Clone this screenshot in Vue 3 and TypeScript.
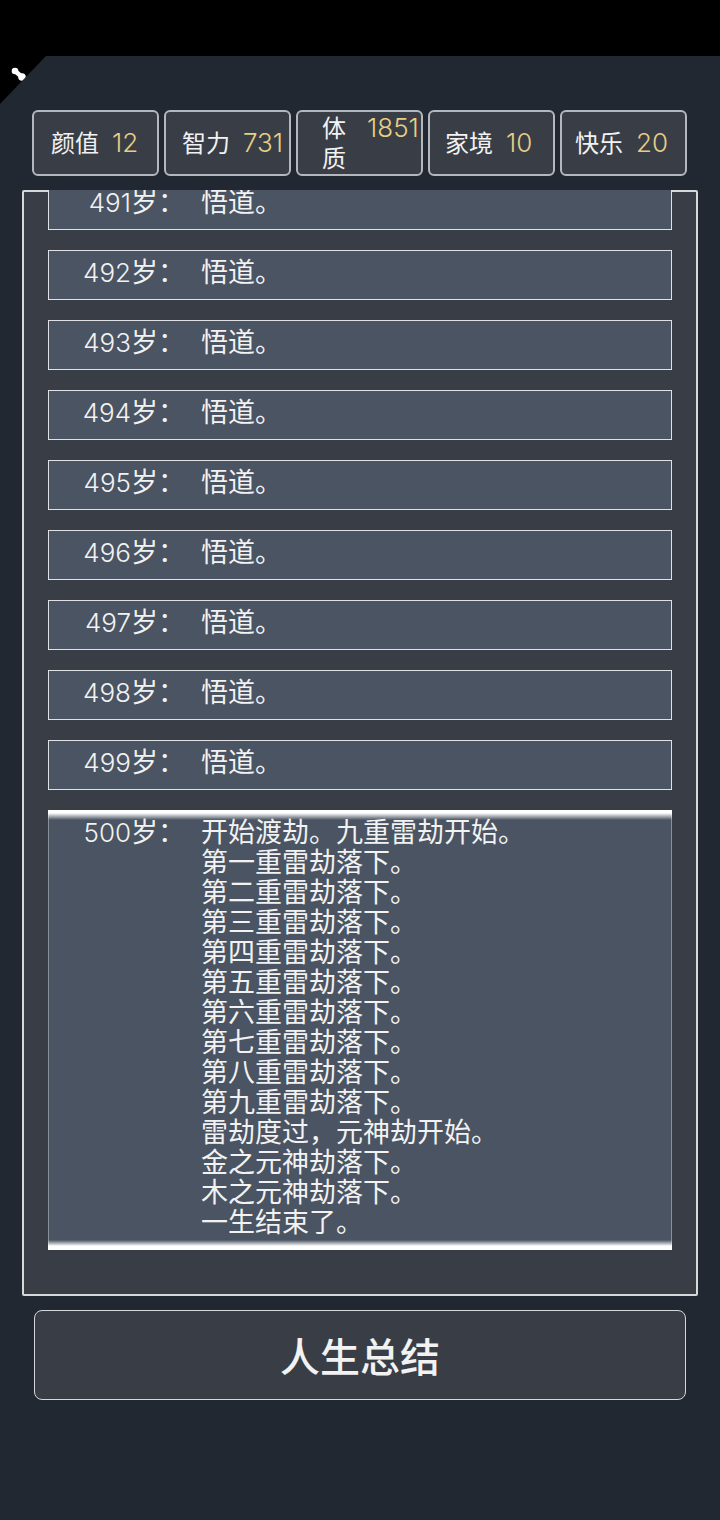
<script setup lang="ts">
interface Stat {
  label: string;
  value: number;
}

interface LifeEvent {
  age: number;
  lines: string[];
}

const stats: Stat[] = [
  { label: '颜值', value: 12 },
  { label: '智力', value: 731 },
  { label: '体质', value: 1851 },
  { label: '家境', value: 10 },
  { label: '快乐', value: 20 },
];

const events: LifeEvent[] = [
  ...[491, 492, 493, 494, 495, 496, 497, 498, 499].map((age) => ({ age, lines: ['悟道。'] })),
  {
    age: 500,
    lines: [
      '开始渡劫。九重雷劫开始。',
      '第一重雷劫落下。',
      '第二重雷劫落下。',
      '第三重雷劫落下。',
      '第四重雷劫落下。',
      '第五重雷劫落下。',
      '第六重雷劫落下。',
      '第七重雷劫落下。',
      '第八重雷劫落下。',
      '第九重雷劫落下。',
      '雷劫度过，元神劫开始。',
      '金之元神劫落下。',
      '木之元神劫落下。',
      '一生结束了。',
    ],
  },
];
</script>

<template>
  <div class="page">
    <div class="status-bar"></div>
    <div class="corner">
      <svg class="corner-icon" viewBox="0 0 16 14" width="16" height="14">
        <circle cx="4" cy="4" r="3.3" fill="#fff" />
        <path d="M4 4 L11 10" stroke="#fff" stroke-width="4.5" />
        <circle cx="11" cy="10" r="3.8" fill="#fff" />
      </svg>
    </div>

    <div class="stats">
      <div v-for="stat in stats" :key="stat.label" class="stat">
        <div class="stat-inner">
          <span class="stat-label">{{ stat.label }}</span>
          <span class="stat-value">{{ stat.value }}</span>
        </div>
      </div>
    </div>

    <div class="panel">
      <div class="list">
        <div
          v-for="event in events"
          :key="event.age"
          class="event"
          :class="{ current: event.age === 500 }"
        >
          <span class="age"><span class="age-num">{{ event.age }}</span>岁：</span>
          <div class="lines">
            <div v-for="line in event.lines" :key="line">{{ line }}</div>
          </div>
        </div>
      </div>
    </div>

    <div class="summary">人生总结</div>
  </div>
</template>

<style>
html,
body {
  margin: 0;
  background: #222831;
}
</style>

<style scoped>
.page {
  position: relative;
  width: 720px;
  height: 1520px;
  background: #222831;
  color: #f2f2f2;
  font-family: Inter, "Noto Sans CJK SC", sans-serif;
  font-weight: 400;
  overflow: hidden;
}

.status-bar {
  height: 56px;
  background: #000;
}

.corner {
  position: absolute;
  top: 56px;
  left: 0;
  width: 46px;
  height: 48px;
  background: #000;
  clip-path: polygon(0 0, 100% 0, 0 100%);
}

.corner-icon {
  position: absolute;
  top: 11px;
  left: 11px;
  filter: blur(0.6px);
}

.stats {
  display: flex;
  gap: 5px;
  margin: 54px 0 14px 32px;
}

.stat {
  box-sizing: border-box;
  width: 127px;
  height: 66px;
  display: flex;
  align-items: center;
  background: #393e46;
  border: 2px solid #b4b8be;
  border-radius: 6px;
}

.stat-inner {
  display: flex;
  align-items: baseline;
  gap: 13px;
  width: 100%;
  padding-left: 17px;
  box-sizing: border-box;
}

.stat:nth-child(2) .stat-inner {
  padding-left: 16px;
}

.stat:nth-child(3) .stat-inner {
  padding-left: 24px;
  gap: 21px;
}

.stat:nth-child(4) .stat-inner {
  padding-left: 15px;
}

.stat:nth-child(5) .stat-inner {
  padding-left: 13px;
}

.stat-label {
  font-size: 24px;
  line-height: 30px;
  flex: 0 0 48px;
}

.stat:nth-child(3) .stat-label {
  flex-basis: 24px;
}

.stat-value {
  font-size: 26px;
  font-weight: 300;
  line-height: 30px;
  color: #e6cf85;
}

.panel {
  box-sizing: border-box;
  width: 676px;
  height: 1106px;
  margin-left: 22px;
  padding: 0 24px 44px;
  display: flex;
  flex-direction: column;
  background: #393e46;
  border: 2px solid #d6d8db;
  border-radius: 2px;
}

.list {
  flex: 1;
  min-height: 0;
  margin-top: -2px;
  display: flex;
  flex-direction: column;
  justify-content: flex-end;
  gap: 20px;
  overflow: hidden;
}

.event {
  flex: none;
  box-sizing: border-box;
  display: flex;
  height: 50px;
  padding: 7px 0 11px;
  background: #4a5462;
  border: 1px solid #dfe1e4;
  font-size: 27px;
  line-height: 30px;
}

.event.current {
  height: 440px;
  padding: 8px 0 10px;
  border-width: 0 1px;
  border-color: rgba(255, 255, 255, 0.35);
  background: linear-gradient(
    #fff 0,
    #fff 3px,
    #4a5462 10px,
    #4a5462 calc(100% - 10px),
    #fff calc(100% - 4px),
    #fff 100%
  );
}

.age {
  flex: none;
  width: 136px;
  margin-right: 16px;
  text-align: right;
  white-space: nowrap;
}

.age-num {
  font-size: 26px;
  font-weight: 300;
}

.summary {
  box-sizing: border-box;
  width: 652px;
  height: 90px;
  margin: 14px 0 0 34px;
  display: flex;
  align-items: center;
  justify-content: center;
  background: #393e46;
  border: 1px solid #d6d8db;
  border-radius: 8px;
  font-size: 40px;
  font-weight: 500;
}
</style>
